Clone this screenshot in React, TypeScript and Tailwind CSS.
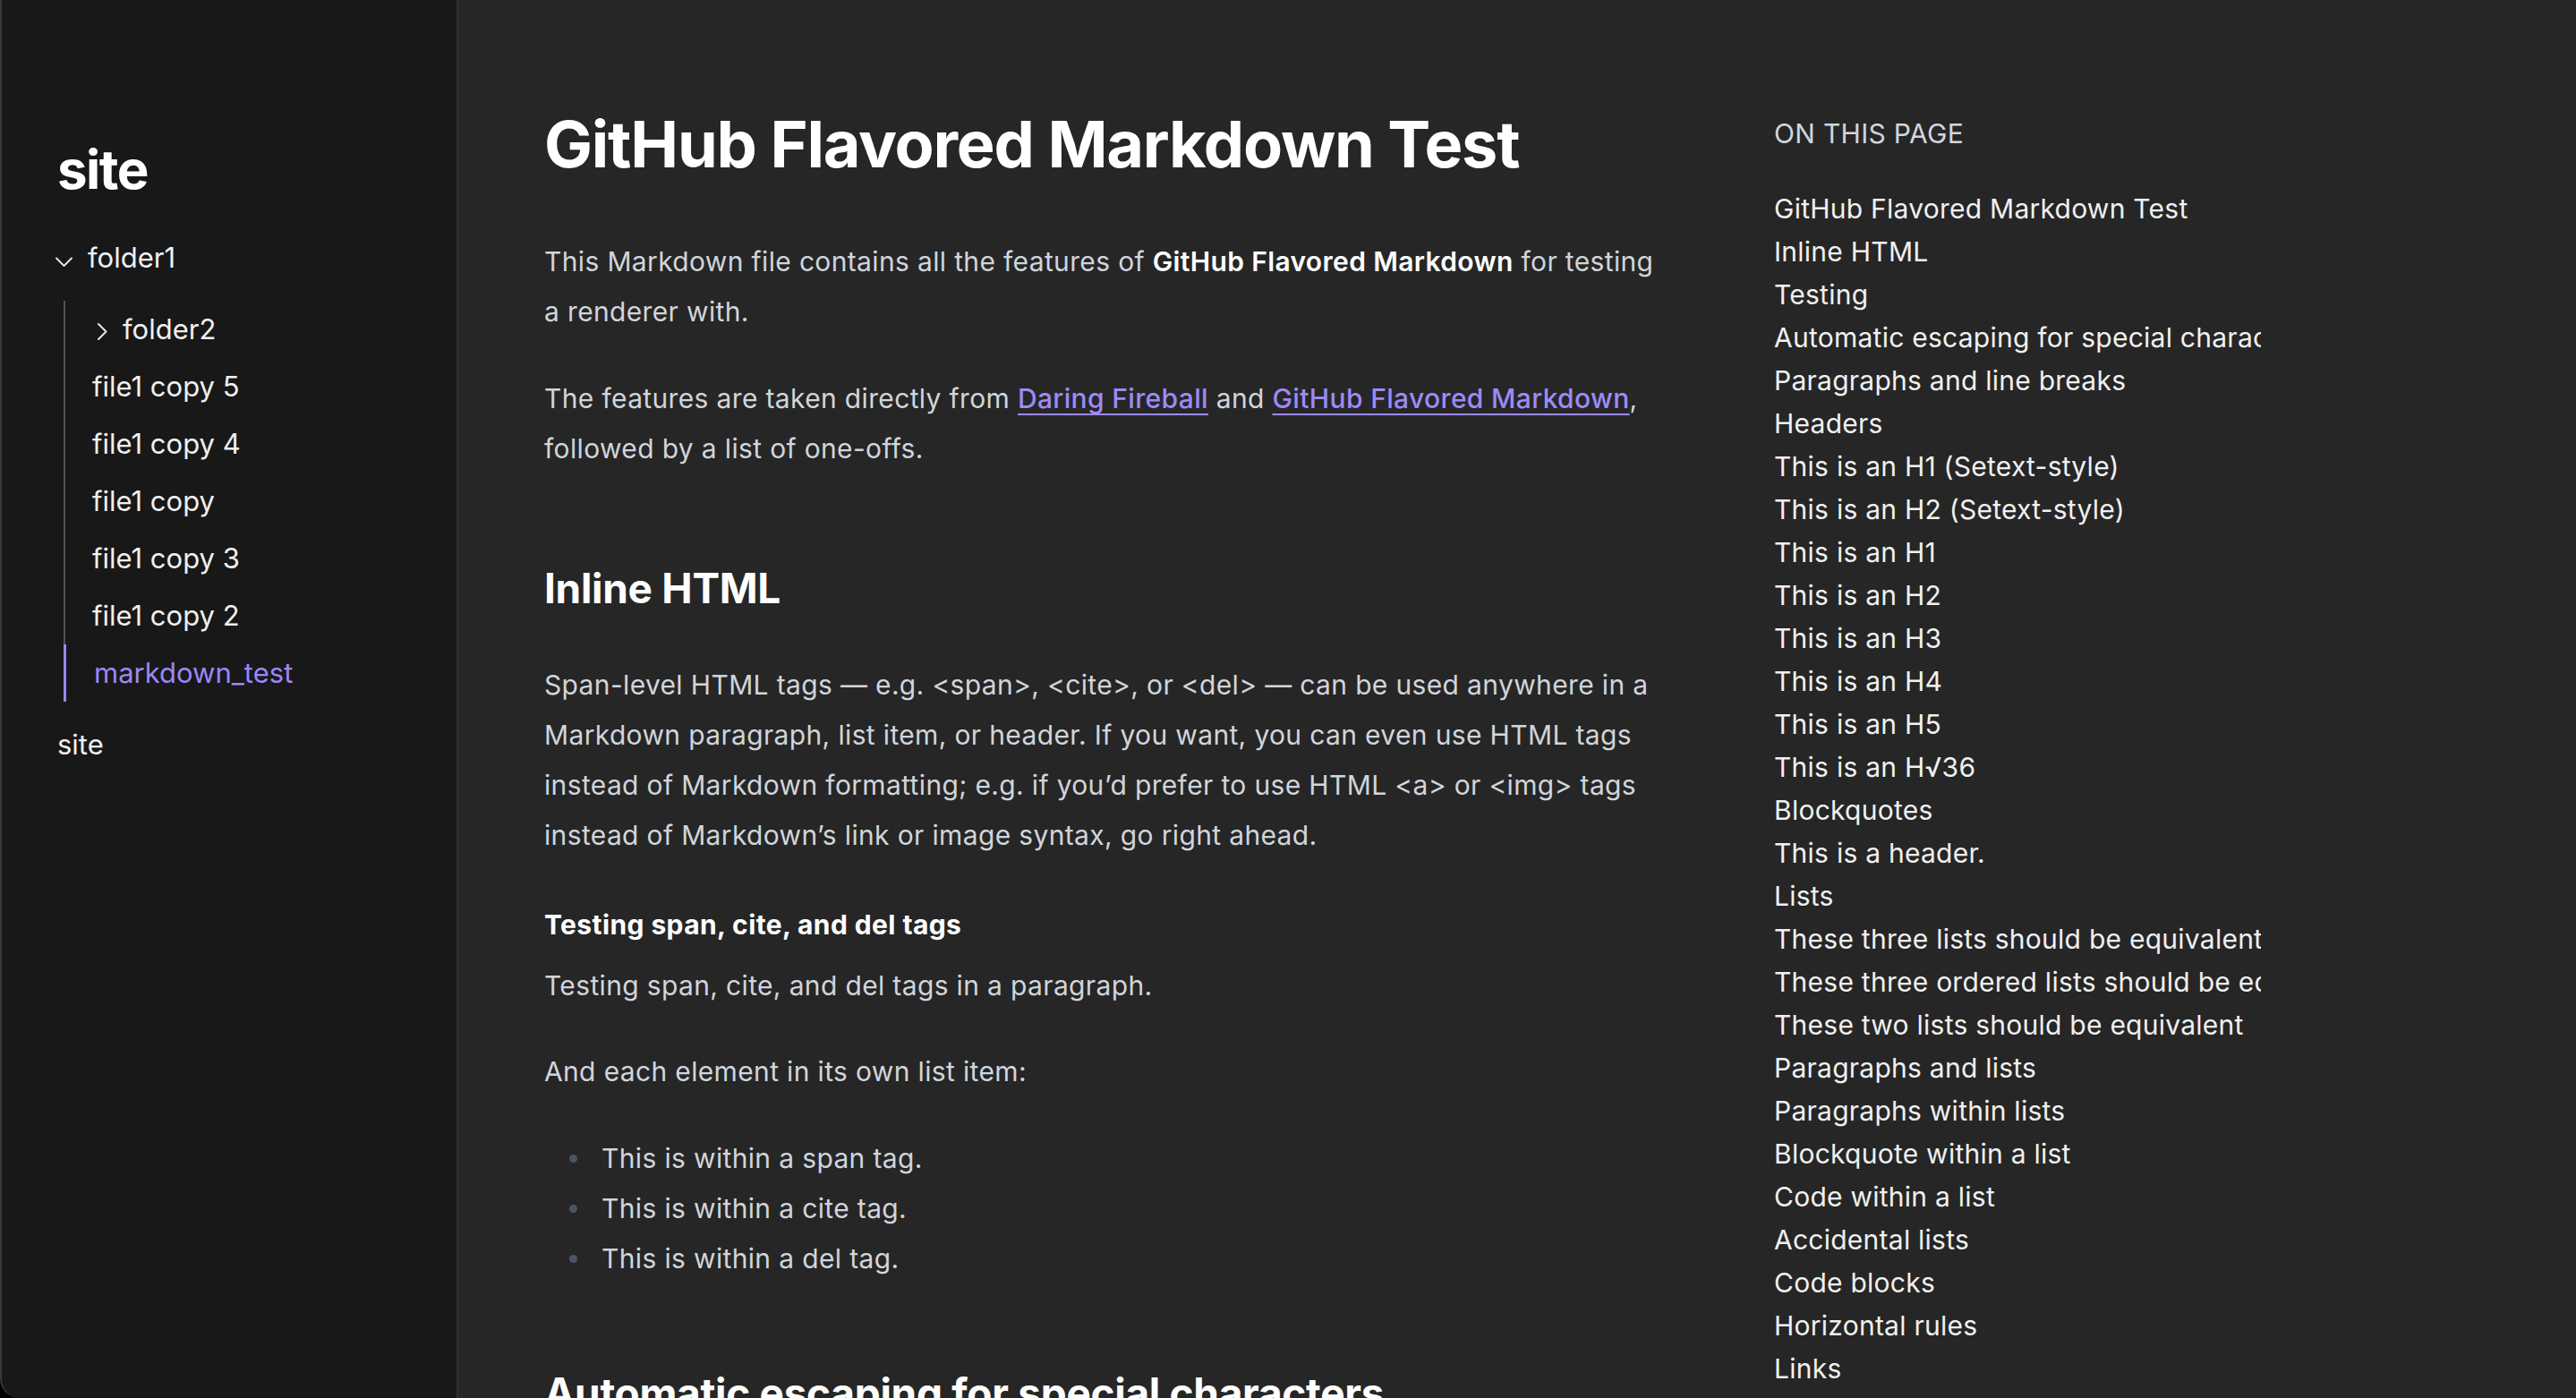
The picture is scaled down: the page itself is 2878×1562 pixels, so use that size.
import React from 'react';

const tocItems = [
  'GitHub Flavored Markdown Test',
  'Inline HTML',
  'Testing',
  'Automatic escaping for special characters',
  'Paragraphs and line breaks',
  'Headers',
  'This is an H1 (Setext-style)',
  'This is an H2 (Setext-style)',
  'This is an H1',
  'This is an H2',
  'This is an H3',
  'This is an H4',
  'This is an H5',
  'This is an H√36',
  'Blockquotes',
  'This is a header.',
  'Lists',
  'These three lists should be equivalent',
  'These three ordered lists should be equivalent',
  'These two lists should be equivalent',
  'Paragraphs and lists',
  'Paragraphs within lists',
  'Blockquote within a list',
  'Code within a list',
  'Accidental lists',
  'Code blocks',
  'Horizontal rules',
  'Links',
  'Emphasis',
  'Code',
];

const files = ['file1 copy 5', 'file1 copy 4', 'file1 copy', 'file1 copy 3', 'file1 copy 2'];

function ChevronDown() {
  return (
    <svg width="32" height="32" viewBox="0 0 32 32" className="shrink-0">
      <polyline points="7,16.5 15.5,25 24,16.5" fill="none" stroke="#e5e5e5" strokeWidth="2" strokeLinecap="round" strokeLinejoin="round" />
    </svg>
  );
}

function ChevronRight() {
  return (
    <svg width="32" height="32" viewBox="0 0 32 32" className="shrink-0">
      <polyline points="7,10 15.5,18.5 7,27" fill="none" stroke="#e5e5e5" strokeWidth="2" strokeLinecap="round" strokeLinejoin="round" />
    </svg>
  );
}

function Sidebar() {
  return (
    <aside className="w-[510px] shrink-0 bg-[#181818] border-r-2 border-[#303030] pl-[54px] pt-[153px]">
      <h2 className="pl-2 text-[60px] leading-[72px] font-bold tracking-tight text-white">site</h2>

      <ul className="mt-[31px] text-[31px] text-[#f0f0f0]">
        <li>
          <div className="flex items-center h-16">
            <ChevronDown />
            <span className="ml-[10px] leading-[64px]">folder1</span>
          </div>

          <ul className="ml-[15px] my-4 border-l-2 border-[#525252]">
            <li className="flex items-center h-16">
              <div className="w-[30px]" />
              <ChevronRight />
              <span className="ml-[2px] leading-[64px]">folder2</span>
            </li>
            {files.map(f => (
              <li key={f} className="h-16 pl-[30px] leading-[64px]">
                {f}
              </li>
            ))}
            <li className="h-16 -ml-[2px] border-l-[3px] border-[#9b87f5] pl-[31px] leading-[64px] text-[#9b87f5]">
              markdown_test
            </li>
          </ul>
        </li>
        <li className="h-16 pl-2 leading-[64px]">site</li>
      </ul>
    </aside>
  );
}

function Article() {
  return (
    <article className="ml-[96px] w-[1300px] shrink-0 pt-[121px] text-[30px] tracking-[0.35px] text-[#d1d5db]">
      <h1 className="text-[72px] leading-[80px] font-bold text-white tracking-[-1.25px]">
        GitHub Flavored Markdown Test
      </h1>

      <p className="mt-[64px] leading-[55.5px]">
        This Markdown file contains all the features of{' '}
        <strong className="font-semibold text-white">GitHub Flavored Markdown</strong> for testing
        <br />
        a renderer with.
      </p>

      <p className="mt-[42px] leading-[55.5px]">
        The features are taken directly from{' '}
        <a className="font-medium text-[#9d8af7] underline underline-offset-[6px] decoration-2">Daring Fireball</a>{' '}
        and{' '}
        <a className="font-medium text-[#9d8af7] underline underline-offset-[6px] decoration-2">GitHub Flavored Markdown</a>,
        <br />
        followed by a list of one-offs.
      </p>

      <h2 className="mt-[96px] text-[46px] leading-[64px] font-bold text-white tracking-[-0.3px]">Inline HTML</h2>

      <p className="mt-[48px] leading-[56px]">
        Span-level HTML tags — e.g. &lt;span&gt;, &lt;cite&gt;, or &lt;del&gt; — can be used anywhere in a
        <br />
        Markdown paragraph, list item, or header. If you want, you can even use HTML tags
        <br />
        instead of Markdown formatting; e.g. if you’d prefer to use HTML &lt;a&gt; or &lt;img&gt; tags
        <br />
        instead of Markdown’s link or image syntax, go right ahead.
      </p>

      <h3 className="mt-[50px] text-[30px] leading-[45px] font-bold text-white tracking-[0.4px]">
        Testing span, cite, and del tags
      </h3>

      <p className="mt-[18px] leading-[55.5px]">Testing span, cite, and del tags in a paragraph.</p>

      <p className="mt-[40px] leading-[55.5px]">And each element in its own list item:</p>

      <ul className="mt-[41px] pl-[28px]">
        {['This is within a span tag.', 'This is within a cite tag.', 'This is within a del tag.'].map(t => (
          <li key={t} className="flex items-center gap-[27px] h-[56px] leading-[56px]">
            <span className="w-[9px] h-[9px] rounded-full bg-[#4b5563] shrink-0" />
            <span>{t}</span>
          </li>
        ))}
      </ul>

      <h2 className="mt-[90px] text-[46px] leading-[64px] font-bold text-white tracking-[-0.3px]">
        Automatic escaping for special characters
      </h2>
      <p className="mt-[48px] leading-[55.5px]">
        You can use special characters like &amp; and &lt; without having to escape them.
      </p>
    </article>
  );
}

function Toc() {
  return (
    <nav className="ml-[74px] w-[544px] shrink-0 overflow-hidden pt-[129px] text-[30px]">
      <div className="leading-[40px] text-[#d1d5db] uppercase whitespace-nowrap tracking-[0.3px]">On this page</div>
      <ul className="mt-[40px] tracking-[0.25px]">
        {tocItems.map(item => (
          <li key={item} className="leading-[48px] h-[48px] whitespace-nowrap text-[#f0f0f0]">
            {item}
          </li>
        ))}
      </ul>
    </nav>
  );
}

export default function App() {
  return (
    <div className="h-[1562px] w-full overflow-hidden bg-black font-[family-name:Inter,'Noto_Sans',sans-serif] antialiased">
      <div className="h-full w-full flex overflow-hidden bg-[#262626] border-l-2 border-[#3a3a3a] rounded-bl-[22px]">
        <Sidebar />
        <main className="flex-1 flex overflow-hidden">
          <Article />
          <Toc />
        </main>
      </div>
    </div>
  );
}
